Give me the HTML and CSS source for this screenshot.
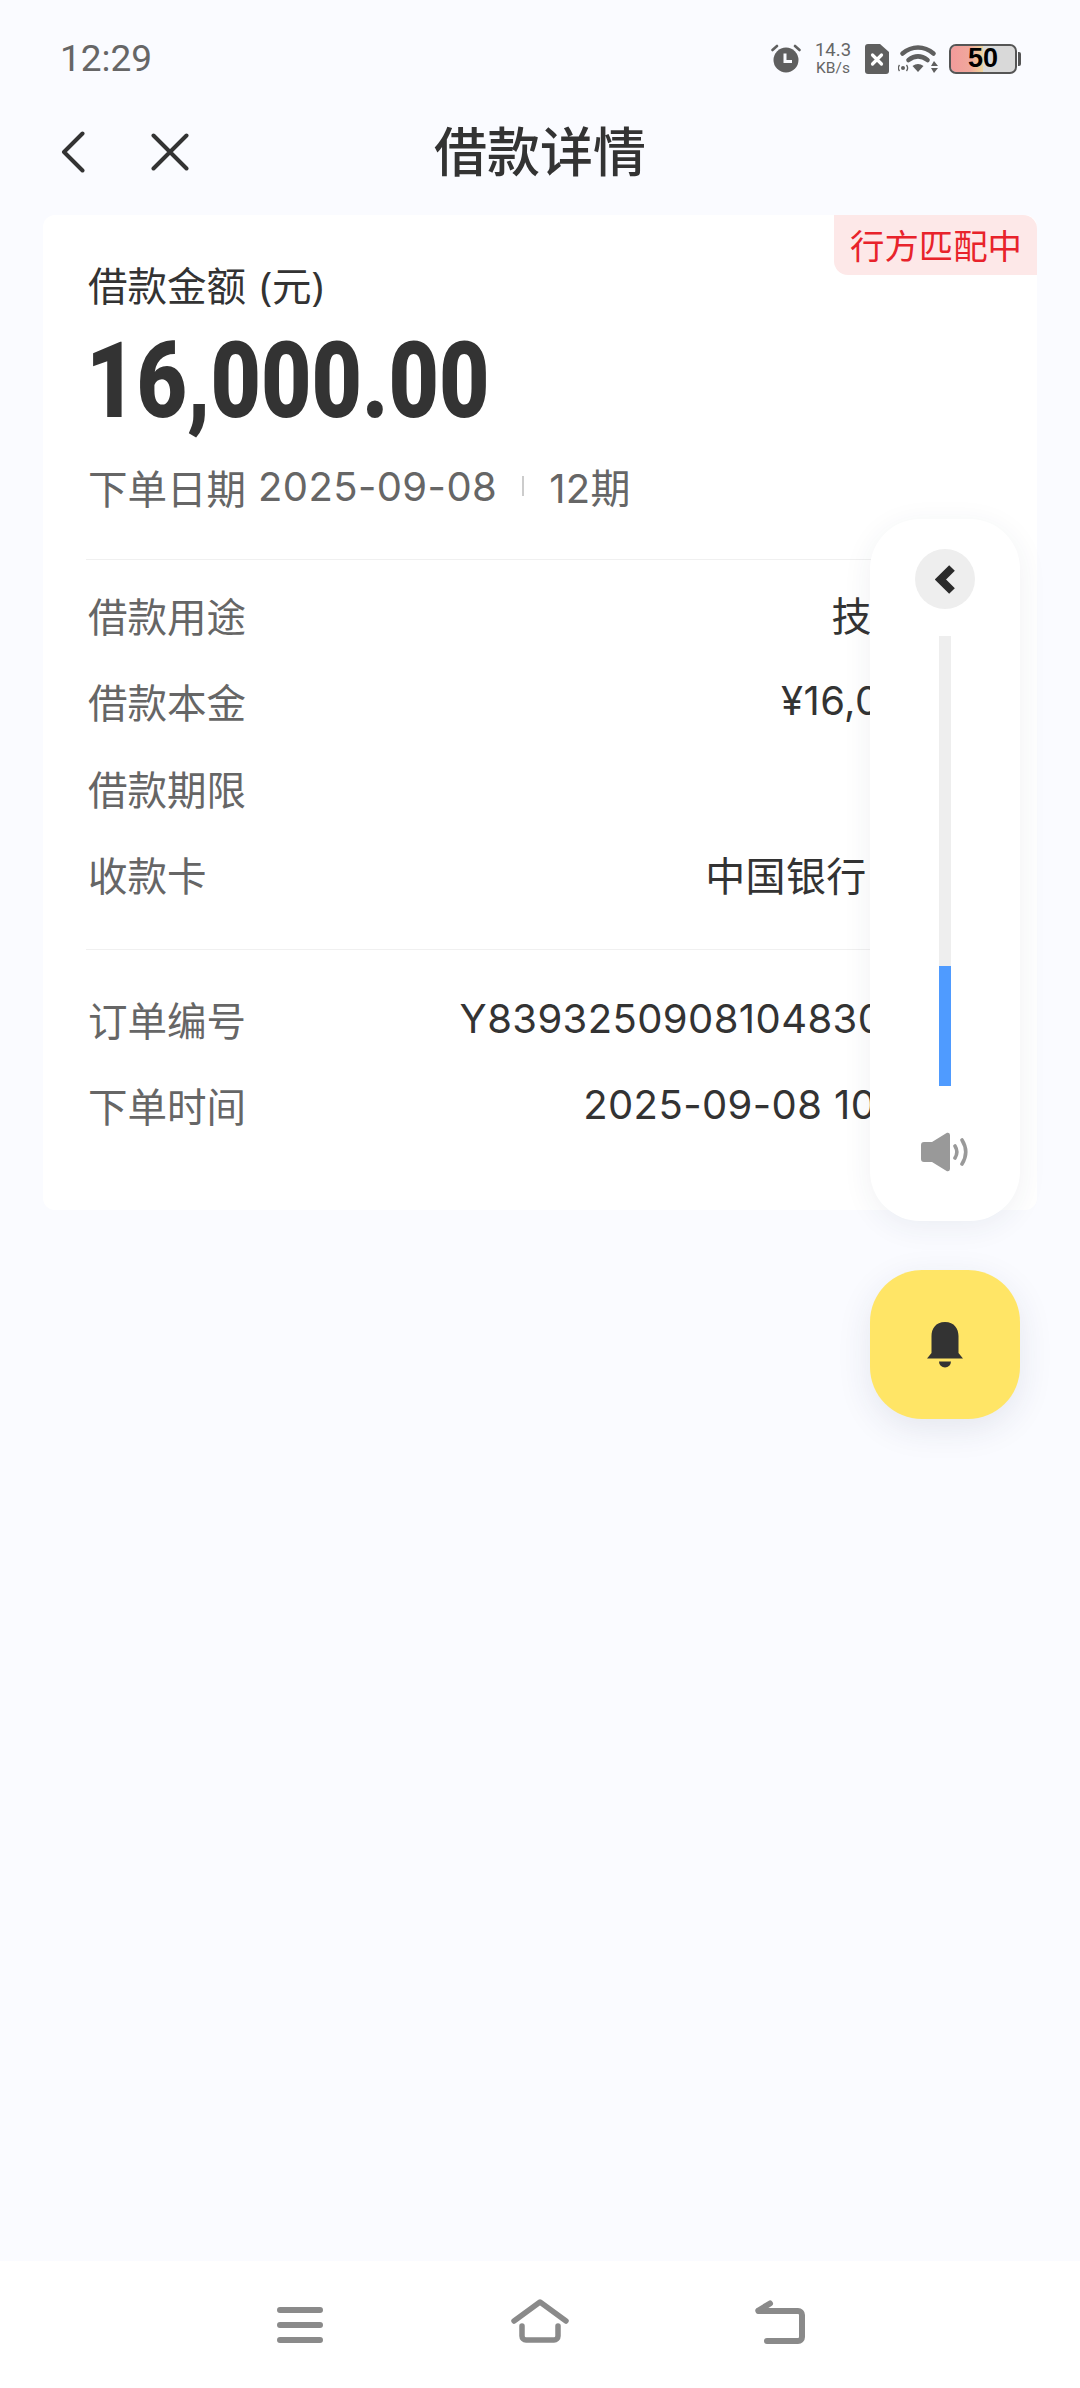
FILE: index.html
```html
<!DOCTYPE html>
<html lang="zh-CN">
<head>
    <meta charset="UTF-8">
    <meta name="viewport" content="width=device-width, initial-scale=1.0">
    <title>借款详情</title>
    <link rel="stylesheet" href="styles.css">
</head>
<body>
    <div class="page">
        <!-- 状态栏 -->
        <div class="status-bar">
            <span class="time">12:29</span>
            <div class="status-icons">
                <svg class="icon-alarm" viewBox="0 0 30 29">
                    <circle cx="15" cy="16" r="12.5" fill="#5f5f5f"/>
                    <path d="M1.5 6 6 2M28.5 6 24 2" stroke="#5f5f5f" stroke-width="2.6" stroke-linecap="round"/>
                    <path d="M14 9.5v8h7" fill="none" stroke="#fafbff" stroke-width="3"/>
                </svg>
                <div class="speed"><span class="speed-num">14.3</span><span class="speed-unit">KB/s</span></div>
                <svg class="icon-sim" viewBox="0 0 24 30">
                    <path d="M3 0h12l9 8v19a3 3 0 0 1-3 3H3a3 3 0 0 1-3-3V3a3 3 0 0 1 3-3z" fill="#5f5f5f"/>
                    <path d="M7.5 11 16.500 20M16.500 11 7.500 20" stroke="#fff" stroke-width="3.2" stroke-linecap="round"/>
                </svg>
                <svg class="icon-wifi" viewBox="0 0 40 29">
                    <path d="M4.500 9.500C14 1.500 26 1.500 35.500 9.500" fill="none" stroke="#5f5f5f" stroke-width="4.600" stroke-linecap="round"/>
                    <path d="M10.500 16c6-4.500 13-4.500 19 0" fill="none" stroke="#5f5f5f" stroke-width="4.600" stroke-linecap="round"/>
                    <path d="M14.500 22c3.500-2.700 7.500-2.700 11 0L20 28z" fill="#5f5f5f"/>
                    <circle cx="5" cy="24" r="2" fill="#5f5f5f"/>
                    <path d="M1.500 21a5 5 0 0 0 0 6M8.500 21a5 5 0 0 1 0 6" fill="none" stroke="#5f5f5f" stroke-width="1.300"/>
                    <path d="M36 17l4 5h-7zM36 29l4-5h-7z" fill="#5f5f5f"/>
                </svg>
                <div class="battery">
                    <div class="battery-body"><span class="battery-num">50</span></div>
                    <div class="battery-cap"></div>
                </div>
            </div>
        </div>

        <!-- 标题栏 -->
        <div class="nav-bar">
            <div class="nav-icons">
                <svg class="icon-back" viewBox="0 0 24 42">
                    <path d="M21.500 2.500 3 21l18.500 18.500" fill="none" stroke="#333" stroke-width="4" stroke-linecap="round" stroke-linejoin="round"/>
                </svg>
                <svg class="icon-close" viewBox="0 0 38 38">
                    <path d="M2.500 2.500l33 33M35.500 2.500l-33 33" fill="none" stroke="#333" stroke-width="4" stroke-linecap="round"/>
                </svg>
            </div>
            <div class="nav-title">借款详情</div>
        </div>

        <!-- 详情卡片 -->
        <div class="main">
            <div class="card">
                <div class="tag">行方匹配中</div>
                <div class="amount-label">借款金额 (元)</div>
                <div class="amount"><span class="amount-num">16,000.00</span></div>
                <div class="order-date">
                    <span class="date-label">下单日期</span>
                    <span>2025-09-08</span>
                    <i class="date-sep"></i>
                    <span>12期</span>
                </div>
                <div class="divider"></div>
                <div class="rows">
                    <div class="row"><span class="row-label">借款用途</span><span class="row-value">技能培训</span></div>
                    <div class="row"><span class="row-label">借款本金</span><span class="row-value">¥16,000.00</span></div>
                    <div class="row"><span class="row-label">借款期限</span><span class="row-value">12期</span></div>
                    <div class="row"><span class="row-label">收款卡</span><span class="row-value">中国银行 (1100)</span></div>
                </div>
                <div class="divider"></div>
                <div class="rows">
                    <div class="row"><span class="row-label">订单编号</span><span class="row-value">Y839325090810483030011</span></div>
                    <div class="row"><span class="row-label">下单时间</span><span class="row-value">2025-09-08 10:48:12</span></div>
                </div>
            </div>
        </div>

        <!-- 悬浮音量面板 -->
        <div class="float-panel">
            <div class="panel-back">
                <svg viewBox="0 0 20 29">
                    <path d="M17 3 5.500 14.500 17 26" fill="none" stroke="#2b2b2b" stroke-width="8"/>
                </svg>
            </div>
            <div class="volume-track"><div class="volume-fill"></div></div>
            <svg class="icon-speaker" viewBox="0 0 48 40">
                <path d="M3 10h8L26 .8a2.500 2.500 0 0 1 3 2.200v34a2.500 2.500 0 0 1-3 2.200L11 30H3a3 3 0 0 1-3-3V13a3 3 0 0 1 3-3z" fill="#999"/>
                <path d="M34 14c2.500 4 2.500 8 0 12M41 8c5 8 5 16 0 24" fill="none" stroke="#999" stroke-width="3.600" stroke-linecap="round"/>
            </svg>
        </div>

        <div class="float-bell">
            <svg viewBox="0 0 36 46">
                <path d="M18 0C8.500 0 4.500 7 4.500 14v17L0 36.500h36L31.500 31V14C31.500 7 27.500 0 18 0z" fill="#333"/>
                <path d="M12 39.500h12a6 6 0 0 1-12 0z" fill="#333"/>
            </svg>
        </div>

        <!-- 底部导航 -->
        <div class="bottom-bar">
            <svg class="nav-menu" viewBox="0 0 46 36">
                <path d="M3 3h40M3 18h40M3 33h40" stroke="#8a8a8a" stroke-width="6" stroke-linecap="round"/>
            </svg>
            <svg class="nav-home" viewBox="0 0 58 44">
                <path d="M3 22 29 3l26 19" fill="none" stroke="#8a8a8a" stroke-width="5.500" stroke-linecap="round" stroke-linejoin="round"/>
                <path d="M11 27v10a4 4 0 0 0 4 4h28a4 4 0 0 0 4-4V27" fill="none" stroke="#8a8a8a" stroke-width="5.500" stroke-linecap="round"/>
            </svg>
            <svg class="nav-return" viewBox="0 0 50 44">
                <path d="M3.500 11H43a4 4 0 0 1 4 4v22a4 4 0 0 1-4 4H12" fill="none" stroke="#8a8a8a" stroke-width="6" stroke-linecap="round" stroke-linejoin="round"/>
                <path d="M3.500 10.500 15 3.500" fill="none" stroke="#8a8a8a" stroke-width="6" stroke-linecap="round"/>
            </svg>
        </div>
    </div>
</body>
</html>
```

FILE: styles.css
```css
body {
    margin: 0;
    padding: 0;
    font-family: Inter, "Noto Sans CJK SC", sans-serif;
    color: #333;
    background-color: #fafbff;
}
.page {
    position: relative;
    width: 1080px;
    height: 2388px;
    display: flex;
    flex-direction: column;
    overflow: hidden;
}
.status-bar {
    height: 116px;
    padding: 0 59px 0 60px;
    display: flex;
    justify-content: space-between;
    align-items: center;
    box-sizing: border-box;
}
.time {
    font-family: Roboto, sans-serif;
    font-size: 37px;
    color: #666;
}
.status-icons {
    display: flex;
    align-items: center;
    gap: 13px;
    margin-top: 1px;
}
.icon-alarm {
    width: 30px;
    height: 29px;
}
.speed {
    width: 38px;
    display: flex;
    flex-direction: column;
    align-items: center;
    color: #666;
    font-family: Roboto, sans-serif;
}
.speed-num {
    font-size: 18.5px;
    line-height: 19px;
}
.speed-unit {
    font-size: 15.5px;
    line-height: 16px;
}
.icon-sim {
    width: 24px;
    height: 30px;
}
.icon-wifi {
    width: 40px;
    height: 29px;
    margin-left: -4px;
}
.battery {
    display: flex;
    align-items: center;
    margin-left: -2px;
}
.battery-body {
    width: 68px;
    height: 30px;
    box-sizing: border-box;
    border: 2px solid #555;
    border-radius: 7px;
    background: linear-gradient(to right, #f29b9b 0, #f0a89c 30%, #eed69a 50%, #d9d9d9 50%);
    background-clip: padding-box;
    display: flex;
    justify-content: center;
    align-items: center;
}
.battery-num {
    font-family: "Liberation Sans", sans-serif;
    font-size: 27px;
    font-weight: bold;
    color: #000;
}
.battery-cap {
    width: 3px;
    height: 14px;
    margin-left: 1px;
    background-color: #555;
    border-radius: 0 2px 2px 0;
}
.nav-bar {
    height: 99px;
    position: relative;
    display: flex;
    justify-content: center;
    align-items: center;
}
.nav-icons {
    position: absolute;
    left: 61px;
    top: 15px;
    display: flex;
    align-items: center;
    gap: 66px;
}
.icon-back {
    width: 24px;
    height: 42px;
}
.icon-close {
    width: 38px;
    height: 38px;
}
.nav-title {
    font-family: "Noto Sans CJK SC", sans-serif;
    font-size: 53px;
    font-weight: 500;
    line-height: 60px;
    color: #333;
    margin-bottom: 33px;
}
.main {
    flex: 1;
    padding: 0 43px;
}
.card {
    position: relative;
    background-color: #fff;
    border-radius: 12px;
    padding: 49px 44px 62px 45px;
}
.tag {
    position: absolute;
    top: 0;
    right: 0;
    height: 60px;
    line-height: 58px;
    padding: 0 15px 0 16px;
    font-family: "Noto Sans CJK SC", sans-serif;
    font-size: 34.4px;
    color: #e8232b;
    background-color: #fde8e8;
    border-radius: 0 14px 0 14px;
}
.amount-label {
    font-size: 39.5px;
    line-height: 44px;
    color: #333;
    font-family: "Noto Sans", "Noto Sans CJK SC", sans-serif;
    word-spacing: 4px;
}
.amount {
    height: 110px;
    line-height: 110px;
    margin-top: 19px;
    margin-left: -2px;
    font-family: Roboto, sans-serif;
    font-size: 105px;
    font-weight: 900;
    color: #333;
}
.amount-num {
    display: inline-block;
    transform: scaleX(0.83);
    transform-origin: left center;
    white-space: nowrap;
}
.order-date {
    height: 44px;
    margin-top: 27px;
    display: flex;
    align-items: center;
    font-size: 40px;
    letter-spacing: 0.4px;
    color: #666;
}
.date-label {
    font-size: 39.5px;
    letter-spacing: 0;
    margin-right: 12px;
}
.date-sep {
    width: 2px;
    height: 20px;
    margin: 0 25px;
    background-color: #ccc;
}
.divider {
    height: 1px;
    margin-left: -2px;
    background-color: #f0f0f0;
}
.order-date + .divider {
    margin-top: 51px;
    margin-bottom: 11px;
}
.rows + .divider {
    margin-top: 32px;
    margin-bottom: 25px;
}
.row {
    height: 86.5px;
    display: flex;
    justify-content: space-between;
    align-items: center;
    font-size: 40px;
    letter-spacing: 0.4px;
}
.row-label {
    color: #666;
    font-size: 39.5px;
    letter-spacing: 0;
}
.row-value {
    color: #333;
    white-space: nowrap;
}
.float-panel {
    position: absolute;
    left: 870px;
    top: 519px;
    width: 150px;
    height: 702px;
    background-color: #fff;
    border-radius: 50px;
    box-shadow: 0 6px 30px rgba(40, 50, 90, 0.07);
    display: flex;
    flex-direction: column;
    align-items: center;
}
.panel-back {
    width: 60px;
    height: 60px;
    margin-top: 30px;
    border-radius: 50%;
    background-color: #eee;
    display: flex;
    justify-content: center;
    align-items: center;
}
.panel-back svg {
    width: 20px;
    height: 29px;
}
.volume-track {
    width: 12px;
    height: 450px;
    margin-top: 27px;
    background-color: #eee;
    display: flex;
    align-items: flex-end;
}
.volume-fill {
    width: 100%;
    height: 120px;
    background-color: #4f9bff;
}
.icon-speaker {
    width: 48px;
    height: 40px;
    margin-top: 46px;
}
.float-bell {
    position: absolute;
    left: 870px;
    top: 1270px;
    width: 150px;
    height: 149px;
    background-color: #ffe566;
    border-radius: 52px;
    box-shadow: 0 10px 34px rgba(40, 50, 90, 0.1);
    display: flex;
    justify-content: center;
    align-items: center;
}
.float-bell svg {
    width: 36px;
    height: 46px;
}
.bottom-bar {
    height: 127px;
    background-color: #fff;
    position: relative;
}
.bottom-bar svg {
    position: absolute;
}
.nav-menu {
    left: 277px;
    top: 46px;
    width: 46px;
    height: 36px;
}
.nav-home {
    left: 511px;
    top: 38px;
    width: 58px;
    height: 44px;
}
.nav-return {
    left: 755px;
    top: 39px;
    width: 50px;
    height: 44px;
}
```
